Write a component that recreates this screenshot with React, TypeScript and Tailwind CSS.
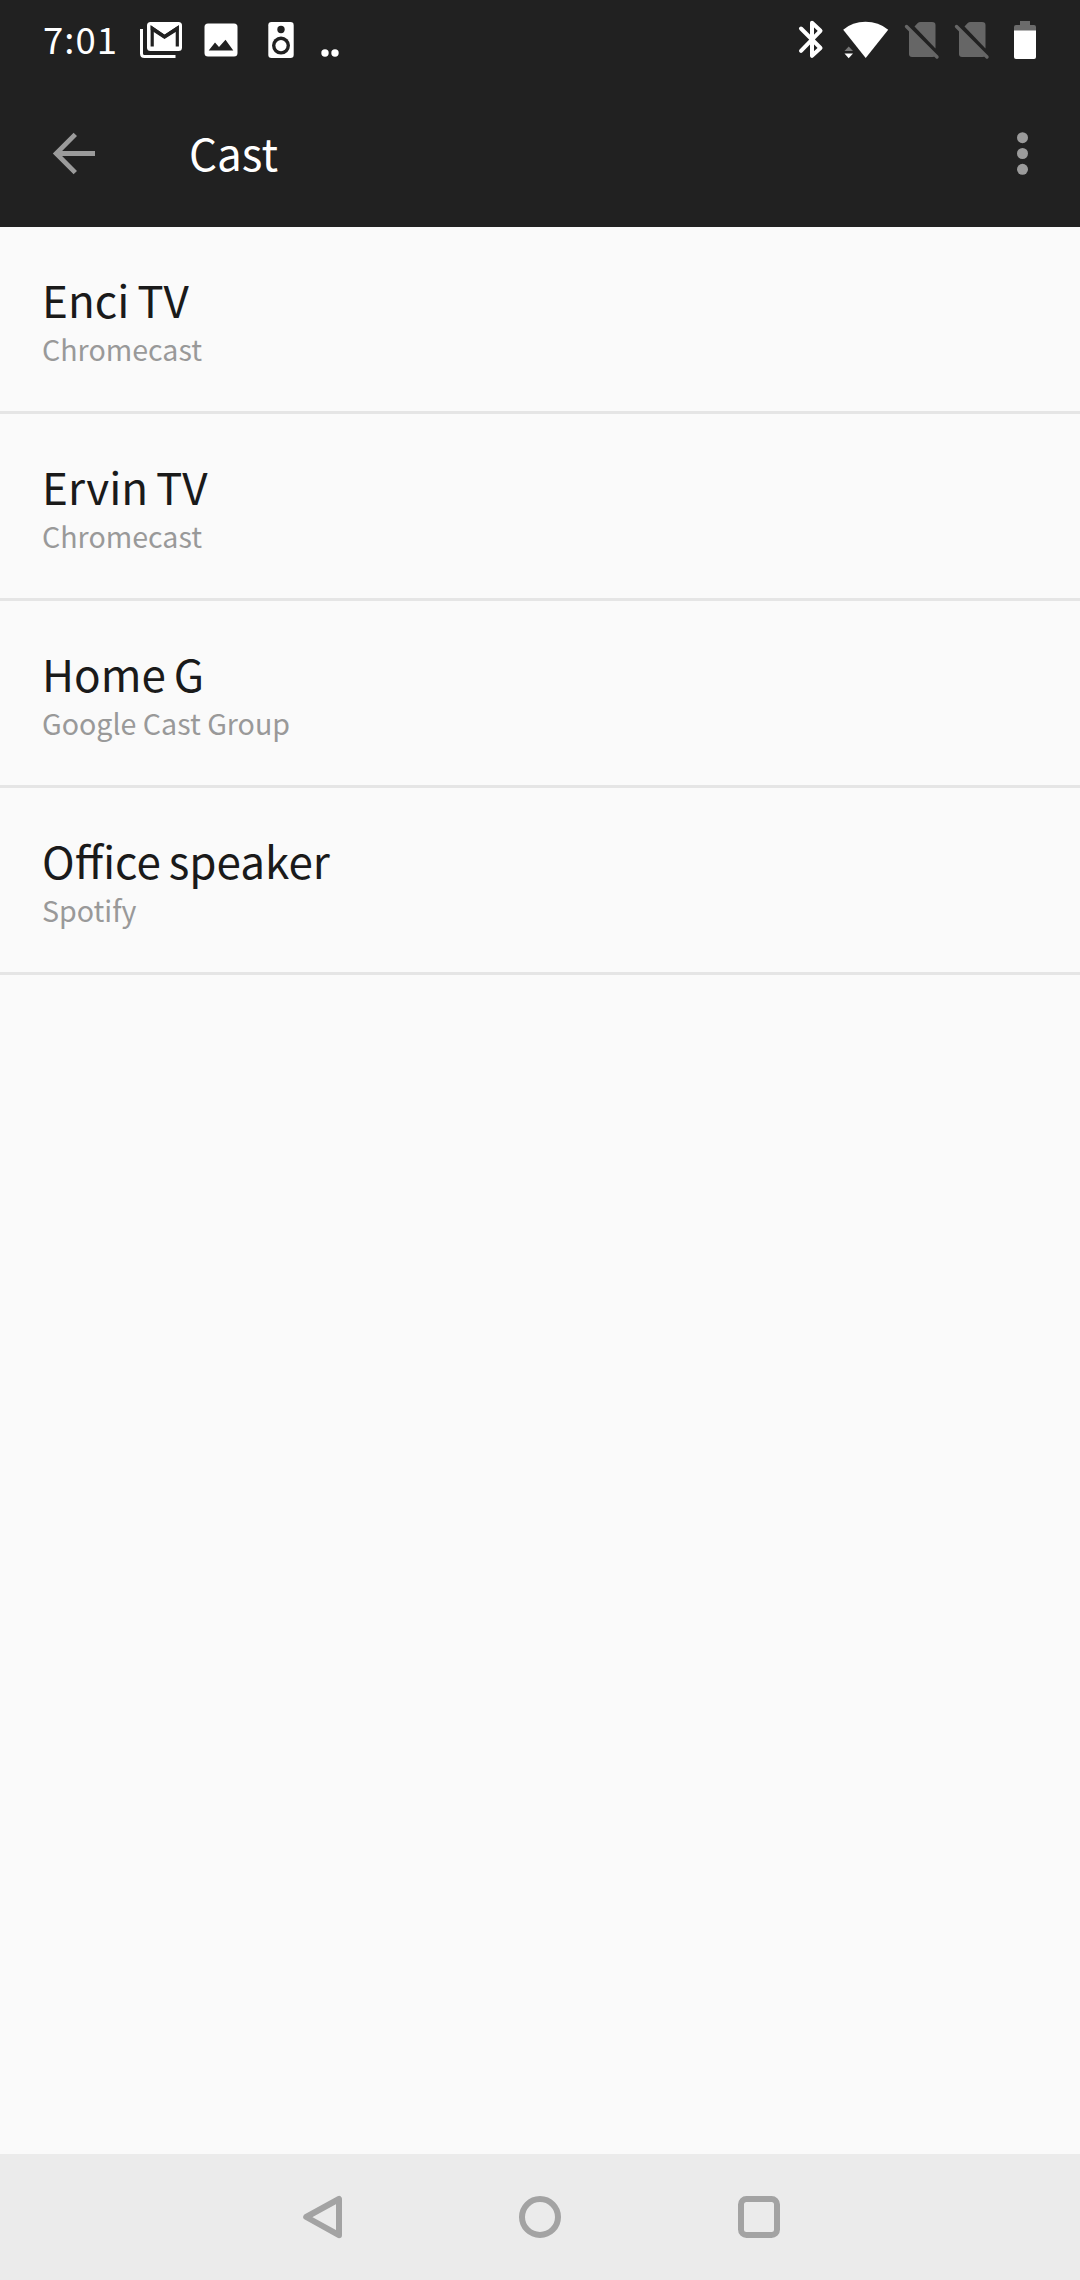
import { useState } from 'react'

interface CastDevice {
  id: string
  name: string
  type: string
}

const devices: CastDevice[] = [
  { id: 'enci', name: 'Enci TV', type: 'Chromecast' },
  { id: 'ervin', name: 'Ervin TV', type: 'Chromecast' },
  { id: 'home', name: 'Home G', type: 'Google Cast Group' },
  { id: 'office', name: 'Office speaker', type: 'Spotify' },
]

function NoSimIcon({ className }: { className?: string }) {
  return (
    <svg className={className} width="36" height="40" viewBox="0 0 36 40" fill="#666">
      <path d="M10.5 6.5L13.5 3.2Q14.7 2 16.5 2H28Q31.5 2 31.5 5V28.5Z" />
      <path d="M5 10L31 36Q30.3 37 28.5 37H8Q5 37 5 34Z" />
      <path d="M2.5 6.5L33 37" stroke="#666" strokeWidth="3.4" strokeLinecap="round" />
    </svg>
  )
}

function StatusBar() {
  return (
    <div className="flex h-20 items-start pt-5">
      <span className="ml-[43px] w-[75px] whitespace-nowrap text-[36.5px] leading-[37px] tracking-[1px] text-white">7:01</span>

      {/* Gmail */}
      <svg className="ml-[22px]" width="42" height="40" viewBox="0 0 42 40">
        <path d="M1.5 9V33.5Q1.5 36.5 4.5 36.5H35.5" fill="none" stroke="#fff" strokeWidth="3" />
        <rect x="7" y="2" width="35" height="29" rx="3.5" fill="#fff" />
        <path d="M12.2 26.5V8.2L24.5 16.5L37.3 8.2V26.5" fill="none" stroke="#212121" strokeWidth="3.2" />
        <path d="M10.7 5.2L24.5 14.8L38.8 5.2V10L24.5 19L10.7 10Z" fill="#212121" />
      </svg>

      {/* Photo */}
      <svg className="ml-[22px]" width="34" height="40" viewBox="0 0 34 40">
        <rect x="0.5" y="3.5" width="33" height="33" rx="3.5" fill="#fff" />
        <path d="M4.7 30.5L11 22.5L15 27L21.5 19.8L29.3 30.5Z" fill="#212121" />
      </svg>

      {/* Speaker */}
      <svg className="ml-[30px]" width="26" height="40" viewBox="0 0 26 40">
        <rect x="0.3" y="2" width="25.4" height="36" rx="3.2" fill="#fff" />
        <circle cx="13" cy="9.5" r="3.7" fill="#212121" />
        <circle cx="13" cy="25.6" r="9" fill="#212121" />
        <circle cx="13" cy="25.6" r="5.6" fill="#fff" />
      </svg>

      <svg className="ml-[26px]" width="20" height="40" viewBox="0 0 20 40" fill="#fff">
        <circle cx="5" cy="33" r="3.7" />
        <circle cx="15" cy="33" r="3.7" />
      </svg>

      {/* Bluetooth */}
      <svg className="ml-auto" width="26" height="40" viewBox="0 0 26 40">
        <path d="M3 8.5L22.5 28L14 35.8V2.8L22.5 10.8L3 30.8" fill="none" stroke="#fff" strokeWidth="4" strokeLinecap="round" strokeLinejoin="round" />
      </svg>

      {/* Wifi with the activity arrows */}
      <svg className="ml-[19px]" width="46" height="40" viewBox="0 0 46 40">
        <path d="M0.2 9.7Q9.5 1.8 22.5 1.8T45.2 9.7L22.7 38Z" fill="#fff" />
        <path d="M1.5 31L5.7 26.5L10 31Z" fill="#777" />
        <path d="M1.5 33.5H10L5.7 38.2Z" fill="#fff" />
      </svg>

      <NoSimIcon className="ml-[15px]" />
      <NoSimIcon className="ml-[14px]" />

      {/* Battery */}
      <svg className="mr-[44px] ml-[24px]" width="22" height="40" viewBox="0 0 22 40">
        <path d="M0 11V7Q0 5 2 5H6V1H16V5H20Q22 5 22 7V11Z" fill="#6b6b6b" />
        <path d="M0 10.5H22V37Q22 39 20 39H2Q0 39 0 37Z" fill="#fff" />
      </svg>
    </div>
  )
}

function AppBar() {
  return (
    <header className="flex h-[147px] items-start pt-[52px]">
      <button className="ml-[52px]" aria-label="Back">
        <svg width="44" height="44" viewBox="0 0 44 44" fill="none" stroke="#9b9b9b" strokeWidth="4.8">
          <path d="M43 21.5H4.2M23.3 2.4L4.2 21.5L23.3 40.6" />
        </svg>
      </button>
      <h1 className="-mt-2 ml-[93px] text-[44px] leading-[56px] text-white">Cast</h1>
      <button className="mr-[51px] ml-auto" aria-label="More options">
        <svg width="13" height="44" viewBox="0 0 13 44" fill="#9b9b9b">
          <circle cx="6.5" cy="5.7" r="5.5" />
          <circle cx="6.5" cy="21.5" r="5.5" />
          <circle cx="6.5" cy="37.3" r="5.5" />
        </svg>
      </button>
    </header>
  )
}

function NavBar() {
  return (
    <nav className="flex h-[126px] items-start bg-[#ebebeb] pt-[40px]">
      <svg className="ml-[302px]" width="42" height="46" viewBox="0 0 42 46" fill="none" stroke="#a3a3a3" strokeWidth="6" strokeLinejoin="round">
        <path d="M37 5V41.2L4.2 23Z" />
      </svg>
      <svg className="ml-[174px]" width="44" height="46" viewBox="0 0 44 46" fill="none" stroke="#a3a3a3" strokeWidth="6">
        <circle cx="22" cy="23" r="18" />
      </svg>
      <svg className="ml-[175px]" width="44" height="46" viewBox="0 0 44 46" fill="none" stroke="#a3a3a3" strokeWidth="6">
        <rect x="4" y="5" width="36" height="36" rx="5.5" />
      </svg>
    </nav>
  )
}

export default function App() {
  const [selected, setSelected] = useState<string | null>(null)

  return (
    <div className="flex h-[2280px] w-[1080px] flex-col bg-[#fafafa] font-['Noto_Sans_CJK_SC',sans-serif]">
      <div className="bg-[#212121]">
        <StatusBar />
        <AppBar />
      </div>

      <main className="flex-1">
        {devices.map((device) => (
          <button
            key={device.id}
            aria-pressed={selected === device.id}
            onClick={() => setSelected(device.id)}
            className="flex h-[187px] w-full flex-col border-b-3 border-[#e5e5e5] pt-[45px] pl-[42px] text-left"
          >
            <span className="text-[44px] leading-[54px] [word-spacing:-2px] text-[#1a1a1a]">{device.name}</span>
            <span className="text-[28.6px] leading-[46px] text-[#999]">{device.type}</span>
          </button>
        ))}
      </main>

      <NavBar />
    </div>
  )
}
